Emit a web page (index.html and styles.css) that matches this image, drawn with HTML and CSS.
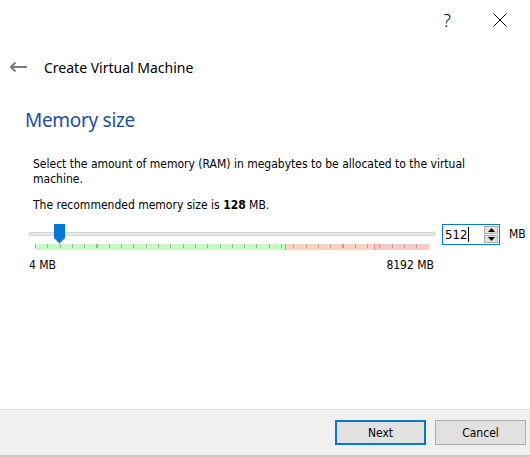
FILE: index.html
```html
<!DOCTYPE html>
<html>
<head>
<meta charset="utf-8">
<link rel="stylesheet" href="styles.css">
</head>
<body>
<div class="window">
  <div class="titlebar">
    <span class="help">?</span>
    <span class="close"><svg width="14" height="14" viewBox="0 0 14 14"><path d="M0.5 0.5 L13.5 13.5 M13.5 0.5 L0.5 13.5" stroke="#000" stroke-width="1" fill="none"/></svg></span>
  </div>
  <div class="header">
    <svg class="back" width="17" height="10" viewBox="0 0 17 10"><path d="M1 5 H17" stroke="#7a7a7a" stroke-width="2"/><path d="M5.5 0.5 L1 5 L5.5 9.5" stroke="#7a7a7a" stroke-width="2" fill="none"/></svg>
    <span class="header-title">Create Virtual Machine</span>
  </div>
  <div class="content">
    <h1 class="page-title">Memory size</h1>
    <p class="desc">Select the amount of memory (RAM) in megabytes to be allocated to the virtual machine.</p>
    <p class="desc rec">The recommended memory size is <b>128</b> MB.</p>
    <div class="slider-row">
      <div class="slider">
        <div class="track"></div>
        <svg class="thumb" width="11" height="20" viewBox="0 0 11 20"><path d="M0 0 H11 V14 L5.5 19.5 L0 14 Z" fill="#0078d7"/></svg>
        <div class="strip"></div>
      </div>
      <div class="spinbox">
        <span class="spin-value">512</span><span class="caret"></span>
        <div class="spin-buttons">
          <div class="spin-btn"><svg width="7" height="4" viewBox="0 0 7 4"><path d="M0 4 L3.5 0 L7 4 Z" fill="#000"/></svg></div>
          <div class="spin-btn"><svg width="7" height="4" viewBox="0 0 7 4"><path d="M0 0 L3.5 4 L7 0 Z" fill="#000"/></svg></div>
        </div>
      </div>
      <span class="unit">MB</span>
    </div>
    <div class="scale-labels">
      <span>4 MB</span>
      <span>8192 MB</span>
    </div>
  </div>
  <div class="footer">
    <button class="btn btn-default">Next</button>
    <button class="btn">Cancel</button>
  </div>
</div>
</body>
</html>
```

FILE: styles.css
```css
html, body {
  margin: 0;
  padding: 0;
  background: #fff;
}
.window {
  width: 530px;
  height: 457px;
  display: flex;
  flex-direction: column;
  font-family: "DejaVu Sans Condensed", "DejaVu Sans", sans-serif;
  font-size: 12px;
  color: #000;
  box-sizing: border-box;
  border-bottom: 2px solid #c9c9c9;
}
.titlebar {
  height: 40px;
  display: flex;
  align-items: center;
  justify-content: flex-end;
  padding-right: 23px;
  gap: 42px;
}
.help {
  font-family: "Noto Sans", sans-serif;
  font-size: 18px;
  font-weight: 300;
  line-height: 1;
}
.close {
  display: flex;
}
.header {
  display: flex;
  align-items: center;
  height: 18px;
  margin-top: 18px;
  padding-left: 10px;
}
.back {
  margin-right: 17px;
}
.header-title {
  font-family: "Noto Sans", sans-serif;
  font-size: 14px;
}
.content {
  flex: 1;
  padding: 0 0 0 25px;
}
.page-title {
  margin: 30px 0 0 0;
  font-family: "Noto Sans", sans-serif;
  font-weight: 400;
  font-size: 19px;
  letter-spacing: -0.3px;
  line-height: 28px;
  color: #1f4ea3;
}
.desc {
  margin: 23px 0 0 8px;
  line-height: 15px;
  width: 470px;
}
.rec {
  margin-top: 11px;
}
.slider-row {
  display: flex;
  align-items: flex-start;
  margin-top: 11px;
  margin-left: 4px;
}
.slider {
  position: relative;
  width: 406px;
  height: 27px;
}
.track {
  position: absolute;
  left: 0;
  top: 8px;
  width: 406px;
  height: 4px;
  box-sizing: border-box;
  background: #e7e7e7;
  border: 1px solid #d6d6d6;
}
.thumb {
  position: absolute;
  left: 25px;
  top: 0;
}
.strip {
  position: absolute;
  left: 6px;
  top: 20px;
  width: 394px;
  height: 6px;
  background:
    repeating-linear-gradient(to right, #a8a8a8 0, #a8a8a8 1px, transparent 1px, transparent 12.3px) 0 0 / 100% 4px no-repeat,
    linear-gradient(to right, #c4fcc4 0, #c4fcc4 250px, #e88888 250px, #e88888 251px, #ffd3c0 251px, #ffd3c0 339px, #e88888 339px, #e88888 340px, #ffc6c6 340px, #ffc6c6 100%);
}
.spinbox {
  margin-left: 7px;
  width: 58px;
  height: 21px;
  box-sizing: border-box;
  border: 1px solid #0078d7;
  display: flex;
  align-items: center;
  position: relative;
}
.spin-value {
  margin-left: 2px;
  font-size: 13px;
}
.caret {
  width: 1px;
  height: 15px;
  background: #000;
  margin-left: 1px;
}
.spin-buttons {
  position: absolute;
  right: 1px;
  top: 1px;
  bottom: 1px;
  width: 14px;
  display: flex;
  flex-direction: column;
  gap: 1px;
}
.spin-btn {
  flex: 1;
  background: #e1e1e1;
  border: 1px solid #adadad;
  display: flex;
  align-items: center;
  justify-content: center;
}
.unit {
  margin-left: 9px;
  line-height: 21px;
}
.scale-labels {
  display: flex;
  justify-content: space-between;
  width: 405px;
  margin-left: 4px;
  margin-top: 7px;
}
.footer {
  height: 46px;
  background: #f0f0f0;
  border-top: 1px solid #dfdfdf;
  display: flex;
  justify-content: flex-end;
  align-items: center;
  gap: 9px;
  padding-right: 4px;
  box-sizing: border-box;
}
.btn {
  width: 91px;
  height: 25px;
  background: #e1e1e1;
  border: 1px solid #adadad;
  font-family: "DejaVu Sans Condensed", "DejaVu Sans", sans-serif;
  font-size: 12px;
  color: #000;
  padding: 0;
  margin: 0;
}
.btn-default {
  border: 2px solid #0078d7;
}
```
